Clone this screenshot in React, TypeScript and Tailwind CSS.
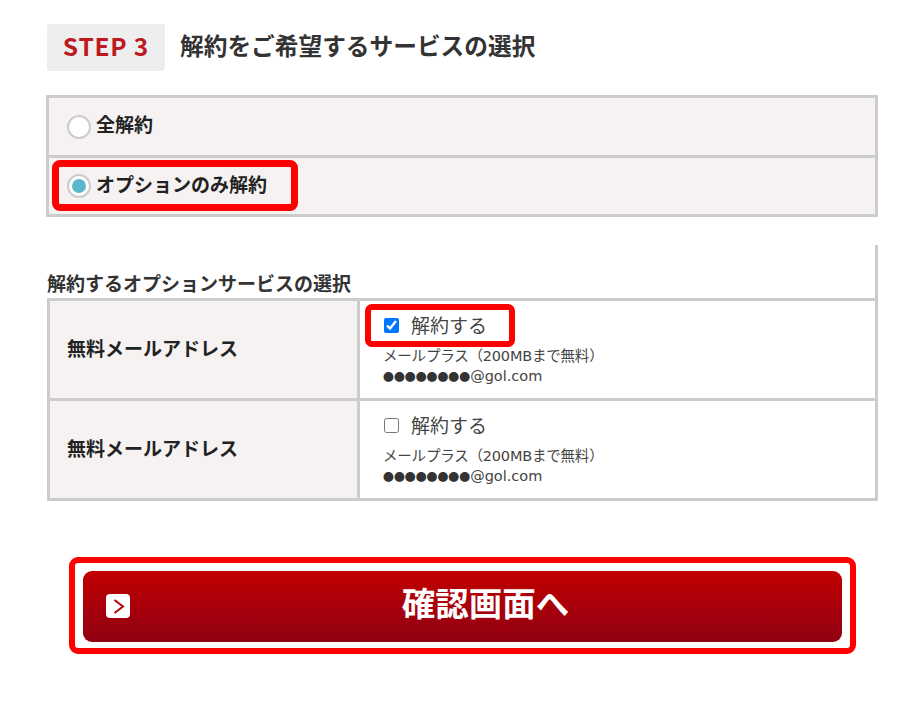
import React from "react";

const font = { fontFamily: '"Noto Sans CJK JP", "Noto Sans", sans-serif' };

function OptionRow({ checked }: { checked: boolean }) {
  return (
    <div className="flex h-[97px] [&+&]:border-t-[3px] [&+&]:border-[#cccccc] [&+&]:h-[100px]">
      <div className="w-[310px] shrink-0 bg-[#f5f2f1] border-r-[3px] border-[#cccccc] flex items-center pl-[17px] pb-[3px] text-[19px] font-bold text-[#222222]">
        無料メールアドレス
      </div>
      <div className="flex-1 bg-white relative pl-[23px] pt-[10px] text-[#444444]">
        <div className="flex items-center h-[28px]">
          <input
            type="checkbox"
            defaultChecked={checked}
            className="w-[15px] h-[15px] m-0 ml-[1px] accent-[#0075ff]"
          />
          <span className="ml-[12px] text-[19px] leading-[28px]">解約する</span>
        </div>
        <div className="mt-[7px] text-[14.5px] leading-[20px] whitespace-nowrap font-['DejaVu_Sans','Noto_Sans_CJK_JP',sans-serif] tracking-[-0.2px]">メールプラス（200MBまで無料）</div>
        <div className="text-[14.5px] leading-[20px] whitespace-nowrap font-['DejaVu_Sans',sans-serif]">
          <span className="text-[10.9px] text-[#333333] font-['Noto_Sans_CJK_JP',sans-serif]">●●●●●●●●</span>@gol.com
        </div>
        {checked && (
          <div className="absolute left-[5px] top-[3px] w-[150px] h-[43px] border-[6px] border-[#ff0000] rounded-[7px]" />
        )}
      </div>
    </div>
  );
}

export default function App() {
  return (
    <div className="w-[924px] h-[713px] bg-white overflow-hidden pt-[24px] pl-[46px]" style={font}>
      <div className="flex items-center">
        <div className="ml-[1px] w-[118px] h-[47px] bg-[#eeeeee] rounded-[3px] flex items-center justify-center text-[24.5px] font-bold text-[#bd1a1f] tracking-[0.8px] pb-[2px]">
          STEP 3
        </div>
        <h2 className="ml-[15px] text-[23.7px] font-bold text-[#333333] -mt-[4px]">解約をご希望するサービスの選択</h2>
      </div>

      <div className="mt-[24px] w-[832px] border-[3px] border-[#cccccc] text-[19px] font-bold text-[#222222] relative">
        <div className="h-[57px] bg-[#f5f2f1] flex items-center pl-[18px]">
          <span className="w-[24px] h-[24px] rounded-full bg-white border-[2px] border-[#cccccc]" />
          <span className="ml-[5px] -mt-[5px]">全解約</span>
        </div>
        <div className="h-[59px] bg-[#f5f2f1] border-t-[3px] border-[#cccccc] flex items-center pl-[18px]">
          <span className="w-[24px] h-[24px] rounded-full bg-white border-[2px] border-[#cccccc] flex items-center justify-center">
            <span className="w-[14px] h-[14px] rounded-full bg-[#5bb8cc]" />
          </span>
          <span className="ml-[5px] -mt-[3px]">オプションのみ解約</span>
        </div>
        <div className="absolute left-[3px] top-[62px] w-[246px] h-[51px] border-[7px] border-[#ff0000] rounded-[8px]" />
      </div>

      <div className="mt-[28px] w-[832px] border-r-[3px] border-[#cccccc] h-[53px] flex items-end pl-[1px]">
        <span className="text-[19px] font-bold text-[#333333] leading-[28px] mb-[1px]">解約するオプションサービスの選択</span>
      </div>
      <div className="ml-[1px] w-[831px] border-[3px] border-[#cccccc]">
        <OptionRow checked />
        <OptionRow checked={false} />
      </div>

      <div className="mt-[56px] ml-[23px] w-[787px] h-[97px] border-[6px] border-[#ff0000] rounded-[9px] pt-[8px] px-[8px] pb-[6px]">
        <button className="relative w-full h-full rounded-[9px] bg-gradient-to-b from-[#c10000] to-[#900010] flex items-center justify-center text-white text-[33.5px] font-bold">
          <span className="absolute left-[23px] top-[23px] w-[24px] h-[24px] bg-white rounded-[4px] flex items-center justify-center">
            <svg width="24" height="24" viewBox="0 0 24 24" fill="none">
              <path d="M8.5 6 L17 12.5 L8.5 19" stroke="#b8000a" strokeWidth="2" />
            </svg>
          </span>
          <span className="-mt-[9px] ml-[46px]">確認画面へ</span>
        </button>
      </div>
    </div>
  );
}
